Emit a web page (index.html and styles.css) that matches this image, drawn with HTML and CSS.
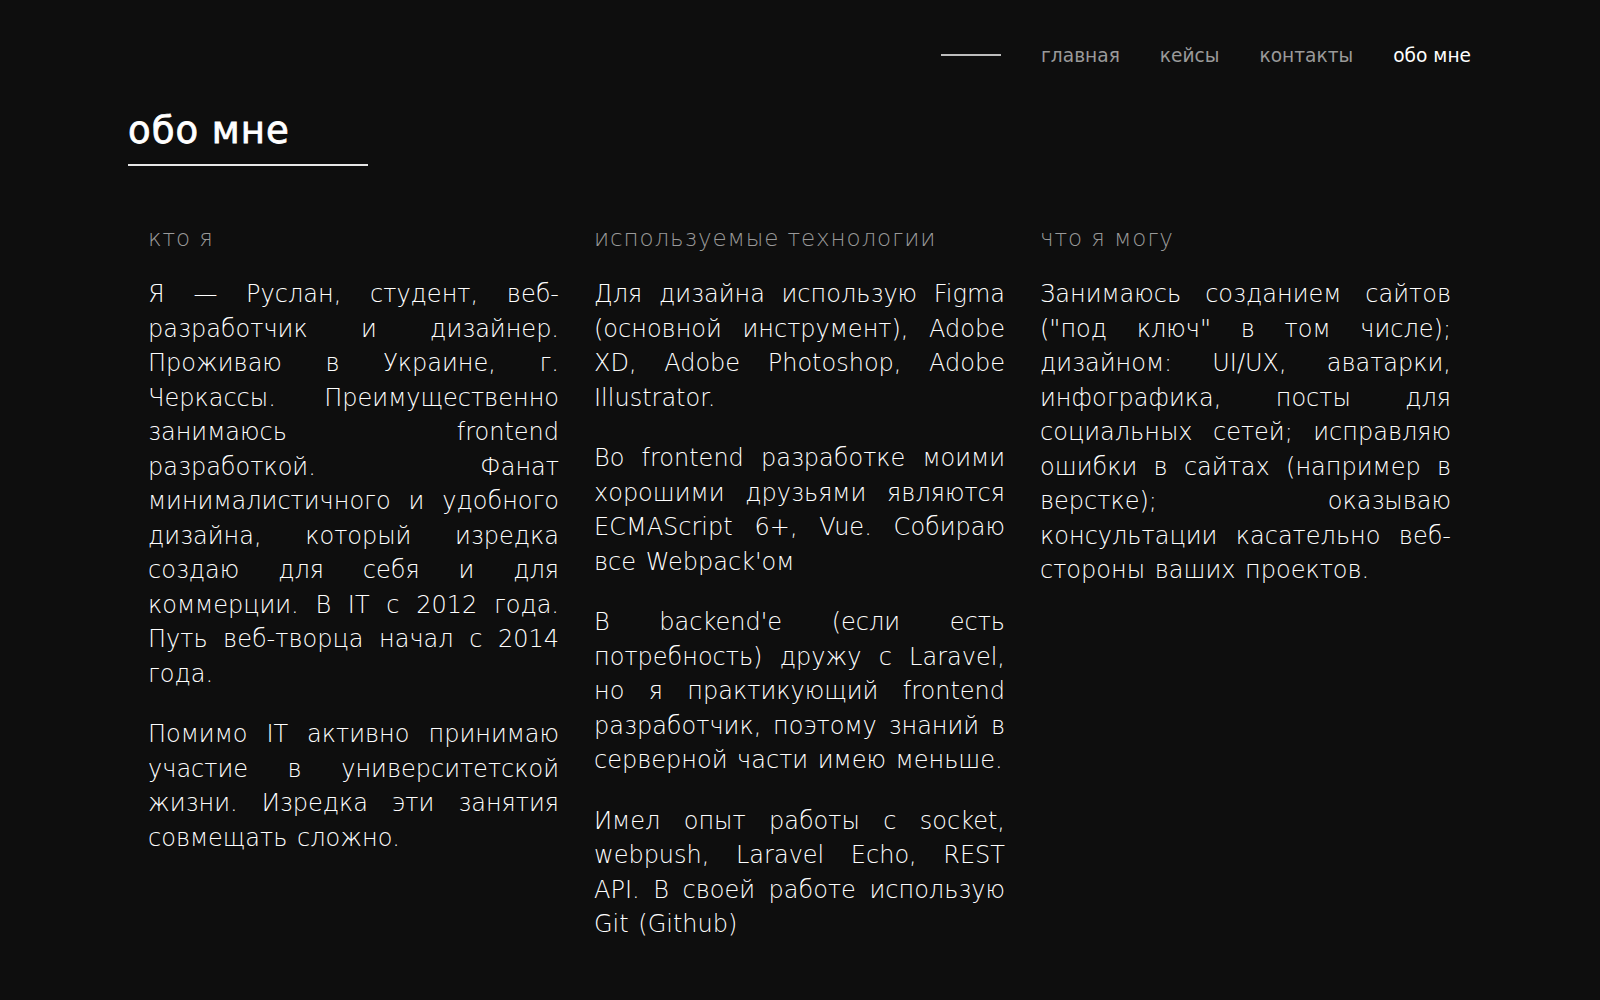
FILE: index.html
```html
<!DOCTYPE html>
<html lang="ru">
<head>
<meta charset="utf-8">
<title>обо мне</title>
<link rel="stylesheet" href="styles.css">
</head>
<body>
<div class="page">
  <header class="header">
    <nav class="nav">
      <span class="nav-line"></span>
      <a class="nav-link" href="#">главная</a>
      <a class="nav-link" href="#">кейсы</a>
      <a class="nav-link" href="#">контакты</a>
      <a class="nav-link active" href="#">обо мне</a>
    </nav>
  </header>
  <h1 class="title">обо мне</h1>
  <main class="columns">
    <section class="col">
      <h2 class="col-title">кто я</h2>
      <p>Я — Руслан, студент, веб-разработчик и дизайнер. Проживаю в Украине, г. Черкассы. Преимущественно занимаюсь frontend разработкой. Фанат минималистичного и удобного дизайна, который изредка создаю для себя и для коммерции. В IT с 2012 года. Путь веб-творца начал с 2014 года.</p>
      <p>Помимо IT активно принимаю участие в университетской жизни. Изредка эти занятия совмещать сложно.</p>
    </section>
    <section class="col">
      <h2 class="col-title">используемые технологии</h2>
      <p>Для дизайна использую Figma (основной инструмент), Adobe XD, Adobe Photoshop, Adobe Illustrator.</p>
      <p>Во frontend разработке моими хорошими друзьями являются ECMAScript 6+, Vue. Собираю все Webpack'ом</p>
      <p>В backend'e (если есть потребность) дружу с Laravel, но я практикующий frontend разработчик, поэтому знаний в серверной части имею меньше.</p>
      <p>Имел опыт работы с socket, webpush, Laravel Echo, REST API. В своей работе использую Git (Github)</p>
    </section>
    <section class="col">
      <h2 class="col-title">что я могу</h2>
      <p>Занимаюсь созданием сайтов ("под ключ" в том числе); дизайном: UI/UX, аватарки, инфографика, посты для социальных сетей; исправляю ошибки в сайтах (например в верстке); оказываю консультации касательно веб-стороны ваших проектов.</p>
    </section>
  </main>
</div>
</body>
</html>
```

FILE: styles.css
```css
* { box-sizing: border-box; }
html, body { margin: 0; padding: 0; }
body {
  background: #0e0e0e;
  color: #ffffff;
  font-family: "DejaVu Sans", "Open Sans", sans-serif;
  width: 1600px;
  height: 1000px;
  overflow: hidden;
}
.page {
  padding: 0 129px 0 128px;
}
.header {
  display: flex;
  justify-content: flex-end;
  padding-top: 42px;
  height: 100px;
}
.nav {
  display: flex;
  align-items: center;
  gap: 40px;
  height: 26px;
}
.nav-line {
  width: 60px;
  height: 2px;
  background: #bdbdbd;
}
.nav-link {
  color: #9a9a9a;
  text-decoration: none;
  font-size: 18.6px;
  font-weight: 400;
}
.nav-link.active { color: #ffffff; }
.title {
  margin: 8px 0 0;
  font-size: 37px;
  font-weight: 400;
  letter-spacing: 1px;
  -webkit-text-stroke: 0.8px #ffffff;
  line-height: 46px;
  width: 240px;
  padding-bottom: 10px;
  border-bottom: 2px solid #e6e6e6;
}
.columns {
  display: grid;
  grid-template-columns: repeat(3, 411px);
  column-gap: 35px;
  padding-left: 20px;
  margin-top: 57px;
}
.col-title {
  margin: 0 0 24px;
  font-size: 23px;
  font-weight: 200;
  letter-spacing: 0.9px;
  color: #9a9a9a;
  line-height: 30px;
}
.col p {
  margin: 0 0 26px;
  font-size: 24px;
  font-weight: 200;
  letter-spacing: 0;
  word-spacing: 2px;
  line-height: 34.5px;
  text-align: justify;
  color: #ffffff;
  hyphens: none;
}
```
